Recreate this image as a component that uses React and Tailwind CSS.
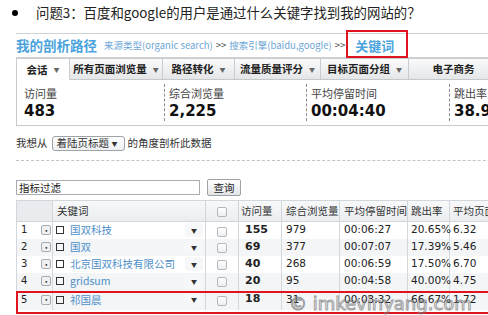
import React from "react";

const cjk = { fontFamily: '"Noto Sans CJK SC", "Noto Sans", sans-serif' };
const verd = { fontFamily: '"DejaVu Sans", "Noto Sans CJK SC", sans-serif' };

const TABS = [
  { label: "会话", w: "w-[54px]", active: true, arrow: true },
  { label: "所有页面浏览量", w: "w-[93px]", arrow: true },
  { label: "路径转化", w: "w-[72px]", arrow: true },
  { label: "流量质量评分", w: "w-[86px]", arrow: true },
  { label: "目标页面分组", w: "w-[88px]", arrow: true },
  { label: "电子商务", w: "w-[90px]" },
];

const METRICS = [
  { label: "访问量", value: "483", w: "w-[147px]" },
  { label: "综合浏览量", value: "2,225", w: "w-[142px]" },
  { label: "平均停留时间", value: "00:04:40", w: "w-[143px]" },
  { label: "跳出率", value: "38.92%", w: "w-[80px]" },
];

const ROWS = [
  ["1", "国双科技", "155", "979", "00:06:27", "20.65%", "6.32"],
  ["2", "国双", "69", "377", "00:07:07", "17.39%", "5.46"],
  ["3", "北京国双科技有限公司", "40", "268", "00:06:59", "17.50%", "6.70"],
  ["4", "gridsum", "20", "95", "00:04:58", "40.00%", "4.75"],
  ["5", "祁国晨", "18", "31", "00:03:32", "66.67%", "1.72"],
];

function Box({ className = "" }) {
  return <span className={"inline-block w-[10px] h-[10px] border border-[#b5b9bd] rounded-[2px] bg-gradient-to-b from-white to-[#eceef0] " + className} />;
}

export default function App() {
  return (
    <div className="relative w-[488px] h-[315px] overflow-hidden bg-white text-[#222]" style={cjk}>
      <div className="flex items-center h-[24px] pl-[12px] pt-[1px]">
        <span className="w-[6px] h-[6px] rounded-full bg-black mr-[18px]" />
        <span className="text-[13.4px] leading-none">问题3：百度和google的用户是通过什么关键字找到我的网站的？</span>
      </div>

      <div className="ml-[16px] w-[540px] mt-[9px]">
        <div className="flex items-center h-[25px] border-t border-b border-[#cfd3d6]">
          <span className="text-[13.5px] font-bold text-[#4aa3dc] leading-none">我的剖析路径</span>
          <span className="ml-[7px] text-[9.5px] text-[#6da6d6] leading-none">来源类型(organic search)</span>
          <span className="ml-[3px] text-[9.5px] text-[#444] leading-none">&gt;&gt;</span>
          <span className="ml-[3px] text-[9.5px] text-[#6da6d6] leading-none">搜索引擎(baidu,google)</span>
          <span className="ml-[3px] text-[9.5px] text-[#444] leading-none">&gt;&gt;</span>
          <span className="relative ml-[10px] text-[13px] font-bold text-[#4aa3dc] leading-none">
            关键词
            <span className="absolute left-[-9px] top-[-9px] w-[62px] h-[28px] border-2 border-[#e0141e]" />
          </span>
        </div>

        <div className="flex h-[22px] border-b border-[#c5c9cc]">
          {TABS.map((t) => (
            <div
              key={t.label}
              className={
                t.w +
                " flex items-center justify-center text-[10.5px] font-bold border-r border-t border-[#c8cbcf] " +
                (t.active ? "bg-white border-l -mb-px" : "bg-gradient-to-b from-[#fbfbfb] to-[#e4e6e8]")
              }
            >
              {t.label}
              {t.arrow && <span className="ml-[6px] text-[6px] text-[#666]">▼</span>}
            </div>
          ))}
        </div>

        <div className="flex h-[46px] border-l border-b border-[#c5c9cc]">
          {METRICS.map((m, i) => (
            <div key={m.label} className={m.w + " flex"}>
              {i > 0 && <div className="my-[4px] border-l border-dashed border-[#8c8c8c]" />}
              <div className={i === 0 ? "pl-[7px] pt-[6px]" : "pl-[4px] pt-[6px]"}>
                <div className="text-[11px] leading-[14px] text-[#444]">{m.label}</div>
                <div className="mt-[2px] text-[15px] font-bold leading-[18px] text-[#111]" style={verd}>{m.value}</div>
              </div>
            </div>
          ))}
        </div>

        <div className="flex items-center h-[34px] text-[10.5px] text-[#333]">
          <span>我想从</span>
          <span className="ml-[4px] flex items-center w-[73px] h-[15px] border border-[#9ea3a8] rounded-[3px] bg-gradient-to-b from-white to-[#eef0f2] pl-[4px]">
            <span className="flex-1">着陆页标题</span>
            <span className="text-[6px] text-[#333] mr-[6px]">▼</span>
          </span>
          <span className="ml-[3px]">的角度剖析此数据</span>
        </div>

        <div className="border-t border-dashed border-[#c3c3c3]" />

        <div className="flex items-center mt-[18px] h-[17px]">
          <div className="w-[184px] h-[15px] border border-[#a9adb1] text-[10.5px] leading-[13px] pl-[2px]">指标过滤</div>
          <div className="ml-[7px] w-[34px] h-[17px] border border-[#9ea3a8] rounded-[2px] bg-gradient-to-b from-white to-[#e3e5e7] text-[10.5px] flex items-center justify-center">查询</div>
        </div>

        <table className="mt-[4px] table-fixed border-collapse text-[10.5px]" style={{ width: 540 }}>
          <colgroup>
            <col style={{ width: 36 }} />
            <col style={{ width: 153 }} />
            <col style={{ width: 33 }} />
            <col style={{ width: 43 }} />
            <col style={{ width: 58 }} />
            <col style={{ width: 68 }} />
            <col style={{ width: 42 }} />
            <col style={{ width: 107 }} />
          </colgroup>
          <thead>
            <tr className="h-[21px] bg-gradient-to-b from-[#f7f8f9] to-[#eaedf0] text-[#333]">
              <th className="border border-[#d3d7db] bg-[#e9ecef]" />
              <th className="border border-[#d3d7db] text-left font-normal pl-[4px]">关键词</th>
              <th className="border border-[#d3d7db]"><Box className="align-middle" /></th>
              <th className="border border-[#d3d7db] text-left font-normal pl-[2px]">访问量</th>
              <th className="border border-[#d3d7db] text-left font-normal pl-[4px]">综合浏览量</th>
              <th className="border border-[#d3d7db] text-left font-normal pl-[4px]">平均停留时间</th>
              <th className="border border-[#d3d7db] text-left font-normal pl-[3px]">跳出率</th>
              <th className="border border-[#d3d7db] text-left font-normal pl-[3px] whitespace-nowrap overflow-hidden">平均页面访问量</th>
            </tr>
          </thead>
          <tbody>
            {ROWS.map((r, i) => (
              <tr key={r[0]} className={(i === 4 ? "h-[20px] " : "h-[17px] ") + (i % 2 === 1 || i === 4 ? "bg-[#f3f5f7]" : "bg-white")}>
                <td className="border-l border-[#d3d7db] pl-[4px]" style={verd}>
                  <span className="text-[10px]">{r[0]}</span>
                  <span className="ml-[14px] inline-flex items-center justify-center w-[10px] h-[10px] border border-[#a8acb0] rounded-[2px] bg-[#eef0f2] text-[6px] align-middle">•</span>
                </td>
                <td className="border-l border-[#d3d7db] pl-[3px]">
                  <div className="flex items-center">
                    <span className="w-[8px] h-[8px] border border-[#333]" />
                    <span className="ml-[6px] flex-1 text-[#4f8fc8]">{r[1]}</span>
                    <span className="w-[18px] h-[14px] mr-[2px] flex items-center justify-center rounded-[3px] bg-[#f6f7f8] text-[6px] text-[#333]">▼</span>
                  </div>
                </td>
                <td className="border-l border-[#d3d7db] text-center"><Box className="align-middle" /></td>
                <td className="border-l border-[#d3d7db] pl-[6px] font-bold text-[11px]" style={verd}>{r[2]}</td>
                <td className="border-l border-[#d3d7db] pl-[4px] text-[10.5px]" style={verd}>{r[3]}</td>
                <td className="border-l border-[#d3d7db] pl-[4px] text-[10.5px]" style={verd}>{r[4]}</td>
                <td className="border-l border-[#d3d7db] pl-[3px] text-[10.5px]" style={verd}>{r[5]}</td>
                <td className="border-l border-[#d3d7db] pl-[3px] text-[10.5px]" style={verd}>{r[6]}</td>
              </tr>
            ))}
          </tbody>
        </table>
      </div>

      <div className="absolute left-[16px] top-[291px] w-[480px] h-[23px] border-2 border-[#e0141e]" />

      <div
        className="absolute left-[289px] top-[295px] text-[18px] leading-none text-transparent whitespace-nowrap"
        style={{ ...verd, WebkitTextStroke: "1px rgba(120,120,120,0.7)" }}
      >
        © imkevinyang.com
      </div>
    </div>
  );
}
